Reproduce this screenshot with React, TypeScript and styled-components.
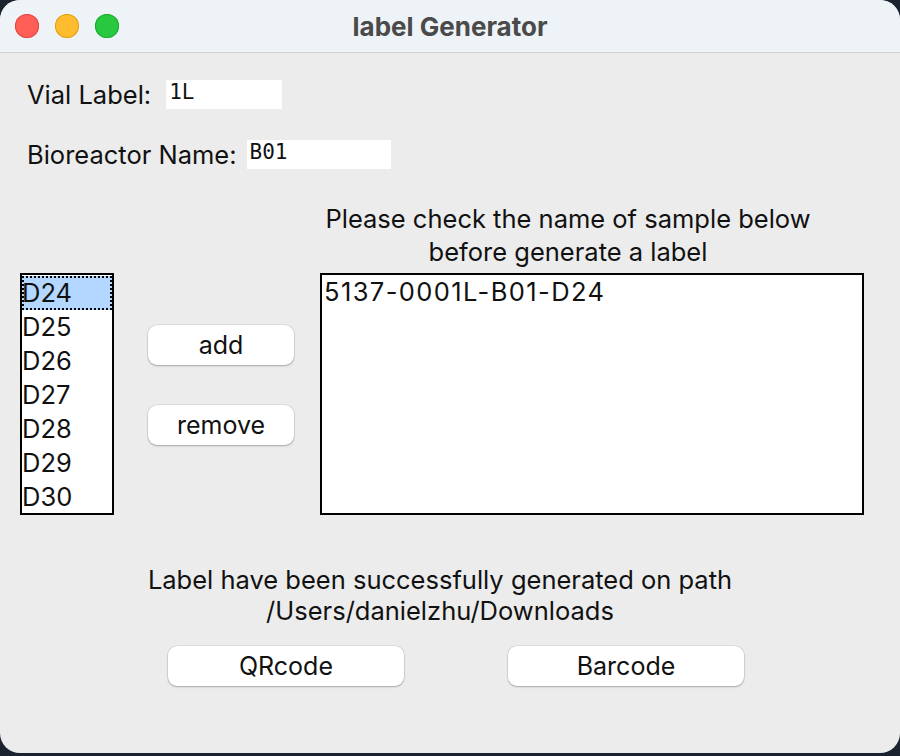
import React from "react";
import styled, { createGlobalStyle } from "styled-components";

const Global = createGlobalStyle`
  html, body { margin: 0; padding: 0; background: #1b2230; }
  #root { width: 900px; height: 756px; }
`;

const Desktop = styled.div`
  width: 900px;
  height: 756px;
  background: #1b2230;
  font-family: "Inter", "Liberation Sans", sans-serif;
  color: #111;
`;

const Window = styled.div`
  width: 900px;
  height: 753px;
  background: #ececec;
  border-radius: 20px;
  overflow: hidden;
  display: flex;
  flex-direction: column;
`;

const TitleBar = styled.div`
  height: 52px;
  flex: none;
  background: #eef3f7;
  border-bottom: 1px solid #cfd2d5;
  display: flex;
  align-items: center;
  position: relative;
`;

const Lights = styled.div`
  display: flex;
  gap: 16px;
  padding-left: 15px;
`;

const Light = styled.span<{ $c: string; $b: string }>`
  width: 24px;
  height: 24px;
  border-radius: 50%;
  background: ${(p) => p.$c};
  box-shadow: inset 0 0 0 1px ${(p) => p.$b};
`;

const Title = styled.div`
  position: absolute;
  left: 0;
  right: 0;
  text-align: center;
  font-weight: 700;
  font-size: 26px;
  color: #4a4a4a;
  pointer-events: none;
`;

const Body = styled.div`
  flex: 1;
  display: flex;
  flex-direction: column;
  padding: 27px 0 0 0;
  font-size: 25.5px;
`;

const FieldRow = styled.div<{ $mt?: number }>`
  display: flex;
  align-items: center;
  padding-left: 27px;
  margin-top: ${(p) => p.$mt ?? 0}px;
  height: 29px;
`;

const FieldLabel = styled.span<{ $gap: number }>`
  margin-right: ${(p) => p.$gap}px;
`;

const TextInput = styled.div<{ $w: number }>`
  width: ${(p) => p.$w}px;
  height: 29px;
  background: #fff;
  font-family: "DejaVu Sans Mono", "Liberation Mono", monospace;
  font-size: 21px;
  line-height: 25px;
  padding-left: 3px;
  box-sizing: border-box;
`;

const Instruction = styled.div`
  margin-top: 33px;
  margin-left: 320px;
  width: 496px;
  text-align: center;
  line-height: 33px;
`;

const MiddleRow = styled.div`
  display: flex;
  align-items: flex-start;
  margin-top: 5px;
  padding-left: 20px;
`;

const ListBox = styled.div`
  width: 94px;
  height: 242px;
  border: 2px solid #000;
  box-sizing: border-box;
  background: #fff;
  padding-top: 1px;
`;

const ListItem = styled.div<{ $sel?: boolean }>`
  height: 34px;
  line-height: 34px;
  box-sizing: border-box;
  background: ${(p) => (p.$sel ? "#b3d7ff" : "transparent")};
  outline: ${(p) => (p.$sel ? "2px dotted #000" : "none")};
  outline-offset: -2px;
`;

const ButtonCol = styled.div`
  display: flex;
  flex-direction: column;
  gap: 40px;
  margin-left: 34px;
  margin-top: 52px;
`;

const Btn = styled.button<{ $w: number }>`
  width: ${(p) => p.$w}px;
  height: 40px;
  background: #fff;
  border: none;
  border-radius: 9px;
  box-shadow: 0 1px 2px rgba(0, 0, 0, 0.25), 0 0 0 0.5px rgba(0, 0, 0, 0.12);
  font-family: "Inter", "Liberation Sans", sans-serif;
  font-size: 25px;
  color: #111;
  padding: 0;
`;

const OutputBox = styled.div`
  width: 544px;
  height: 242px;
  border: 2px solid #000;
  box-sizing: border-box;
  background: #fff;
  margin-left: 26px;
  line-height: 34px;
  padding-left: 2px;
  letter-spacing: 1.4px;
`;

const Message = styled.div`
  margin-top: 49px;
  width: 880px;
  text-align: center;
  line-height: 31px;
`;

const BottomRow = styled.div`
  display: flex;
  gap: 104px;
  padding-left: 168px;
  margin-top: 20px;
`;

export default function App() {
  return (
    <Desktop>
      <Global />
      <Window>
        <TitleBar>
          <Lights>
            <Light $c="#ff5f57" $b="#e2463f" />
            <Light $c="#febc2e" $b="#e1a116" />
            <Light $c="#28c840" $b="#1aab29" />
          </Lights>
          <Title>label Generator</Title>
        </TitleBar>
        <Body>
          <FieldRow>
            <FieldLabel $gap={15}>Vial Label:</FieldLabel>
            <TextInput $w={116}>1L</TextInput>
          </FieldRow>
          <FieldRow $mt={31}>
            <FieldLabel $gap={10}>Bioreactor Name:</FieldLabel>
            <TextInput $w={144}>B01</TextInput>
          </FieldRow>
          <Instruction>
            Please check the name of sample below
            <br />
            before generate a label
          </Instruction>
          <MiddleRow>
            <ListBox>
              {["D24", "D25", "D26", "D27", "D28", "D29", "D30"].map((d, i) => (
                <ListItem key={d} $sel={i === 0}>
                  {d}
                </ListItem>
              ))}
            </ListBox>
            <ButtonCol>
              <Btn $w={146}>add</Btn>
              <Btn $w={146}>remove</Btn>
            </ButtonCol>
            <OutputBox>5137-0001L-B01-D24</OutputBox>
          </MiddleRow>
          <Message>
            Label have been successfully generated on path
            <br />
            /Users/danielzhu/Downloads
          </Message>
          <BottomRow>
            <Btn $w={236}>QRcode</Btn>
            <Btn $w={236}>Barcode</Btn>
          </BottomRow>
        </Body>
      </Window>
    </Desktop>
  );
}
